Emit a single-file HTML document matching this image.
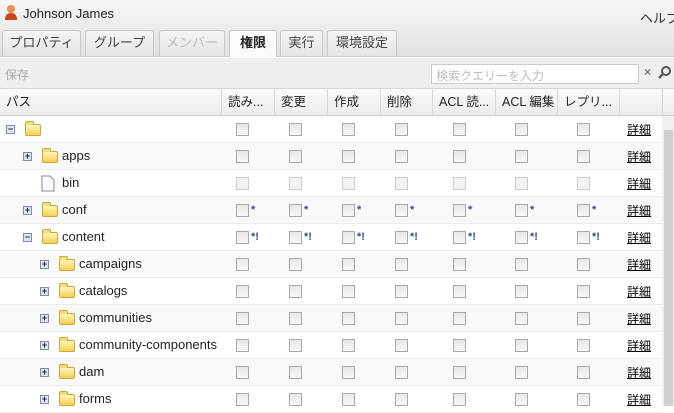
<!DOCTYPE html>
<html><head><meta charset="utf-8"><style>
*{box-sizing:border-box;margin:0;padding:0}
body{width:674px;height:406px;overflow:hidden;background:#fff;font-family:"Liberation Sans","Noto Sans CJK JP",sans-serif;font-size:12px;color:#222;position:relative}
.title{position:absolute;left:0;top:0;width:674px;height:27px;background:linear-gradient(#f6f6f6,#ececec)}
.tabs{position:absolute;left:0;top:27px;width:674px;height:30px;background:linear-gradient(#ececec,#e2e2e2);border-bottom:1px solid #d0d0d0}
.tab{position:absolute;top:3px;height:26px;border:1px solid #c8c8c8;border-bottom:none;border-radius:3px 3px 0 0;background:linear-gradient(#f5f5f5,#e4e4e4);font-size:13px;text-align:center;line-height:24px;color:#444}
.tb{position:absolute;left:0;top:58px;width:674px;height:31px;background:#efefef;border-bottom:1px solid #d8d8d8}
.hdr{position:absolute;left:0;top:89px;width:674px;height:27px;background:linear-gradient(#fafafa,#ececec);border-bottom:1px solid #d0d0d0;font-size:12.5px}
.hdr span{position:absolute;top:0;height:27px;line-height:27px;border-left:1px solid #d8d8d8;padding-left:6px;white-space:nowrap;overflow:hidden}
.row{position:absolute;left:0;width:662px;height:27px;border-bottom:1px solid #ececec;font-size:13px}
.row.g{background:#f9f9f9}
.cb{position:absolute;top:7px;width:13px;height:13px;border:1px solid #a8a8a8;background:linear-gradient(#e8e8e8,#f8f8f8)}
.cb.d{border-color:#ccc;background:#f2f2f2}
.st{position:absolute;top:8px;font-size:11px;line-height:11px;color:#3a4f8a;font-weight:bold}
.det{position:absolute;left:627px;top:5px;text-decoration:underline;font-size:12px;color:#000}
.fold{position:absolute;top:8px;width:16px;height:12px;background:linear-gradient(#fff6c0,#f2cf50);border:1px solid #c9a93a;border-radius:2px}
.fold:before{content:"";position:absolute;left:-1px;top:-4px;width:7px;height:3px;background:#f5dc7c;border:1px solid #c9a93a;border-bottom:none;border-radius:2px 2px 0 0}
.tg{position:absolute;top:9px;width:9px;height:9px;border:1px solid #7e8cae;background:#dfe4f0;font-size:9px;line-height:7px;text-align:center;color:#223;font-weight:bold}
.nm{position:absolute;top:5px}
</style></head><body>
<div class="title">
<svg style="position:absolute;left:4px;top:4px" width="14" height="17"><circle cx="7" cy="5" r="4" fill="#e8914a"/><path d="M1 16 Q1 9 7 9 Q13 9 13 16Z" fill="#c8451e"/></svg>
<span style="position:absolute;left:23px;top:6px;font-size:13px">Johnson James</span>
<span style="position:absolute;left:640px;top:8px;font-size:13px;color:#333;white-space:nowrap">ヘルプ</span>
</div>
<div class="tabs">
<div class="tab" style="left:2px;width:79px">プロパティ</div>
<div class="tab" style="left:85px;width:69px">グループ</div>
<div class="tab" style="left:159px;width:66px;color:#bbb">メンバー</div>
<div class="tab" style="left:229px;width:48px;background:#fafafa;font-weight:bold;color:#222;height:27px">権限</div>
<div class="tab" style="left:280px;width:43px">実行</div>
<div class="tab" style="left:327px;width:70px">環境設定</div>
</div>
<div class="tb">
<span style="position:absolute;left:5px;top:8px;color:#aaa;font-size:12px">保存</span>
<div style="position:absolute;left:431px;top:6px;width:208px;height:20px;border:1px solid #ccc;background:#fff;color:#bbb;font-size:12px;padding:2px 4px">検索クエリーを入力</div>
<span style="position:absolute;left:644px;top:7px;color:#777;font-weight:bold">×</span>
<svg style="position:absolute;left:658px;top:7px" width="14" height="14"><circle cx="8" cy="6" r="4" fill="none" stroke="#555" stroke-width="2"/><path d="M5 9 L1 13" stroke="#555" stroke-width="2.5"/></svg>
</div>
<div class="hdr">
<span style="left:0;border:none">パス</span>
<span style="left:221px;width:53px">読み...</span>
<span style="left:274px;width:53px">変更</span>
<span style="left:327px;width:53px">作成</span>
<span style="left:380px;width:52px">削除</span>
<span style="left:432px;width:63px">ACL 読...</span>
<span style="left:495px;width:62px">ACL 編集</span>
<span style="left:557px;width:62px">レプリ...</span>
<span style="left:619px;width:43px"></span>
<span style="left:662px;width:12px"></span>
</div>
<div style="position:absolute;left:662px;top:116px;width:12px;height:290px;background:#f0f0f0"><div style="position:absolute;left:2px;top:14px;width:9px;height:276px;background:#cfcfcf"></div></div>
<div id="rows"></div>
<script>
var xs=[236,289,342,395,453,515,577];
var rows=[["",0,"-",1,0],["apps",1,"+",1,0],["bin",1,"",0,0],["conf",1,"+",1,1],["content",1,"-",1,2],["campaigns",2,"+",1,0],["catalogs",2,"+",1,0],["communities",2,"+",1,0],["community-components",2,"+",1,0],["dam",2,"+",1,0],["forms",2,"+",1,0]];
var h="";
rows.forEach(function(r,i){
var ind=r[1]*17, y=116+i*27;
h+='<div class="row'+(i%2?' g':'')+'" style="top:'+y+'px">';
if(r[2])h+='<div class="tg" style="left:'+(6+ind)+'px">'+(r[2]=="-"?"−":"+")+'</div>';
if(r[3])h+='<div class="fold" style="left:'+(25+ind)+'px"></div>';
else h+='<svg style="position:absolute;left:'+(41)+'px;top:5px" width="14" height="17"><path d="M1 1H9L13 5V16H1Z" fill="#fff" stroke="#7b86a0"/></svg>';
h+='<span class="nm" style="left:'+(45+ind)+'px">'+r[0]+'</span>';
xs.forEach(function(x){h+='<div class="cb'+(r[0]=="bin"?' d':'')+'" style="left:'+x+'px"></div>';
if(r[4]==1)h+='<span class="st" style="left:'+(x+15)+'px">*</span>';
if(r[4]==2)h+='<span class="st" style="left:'+(x+15)+'px">*!</span>';});
h+='<span class="det">詳細</span></div>';});
document.getElementById("rows").innerHTML=h;
</script>
</body></html>
